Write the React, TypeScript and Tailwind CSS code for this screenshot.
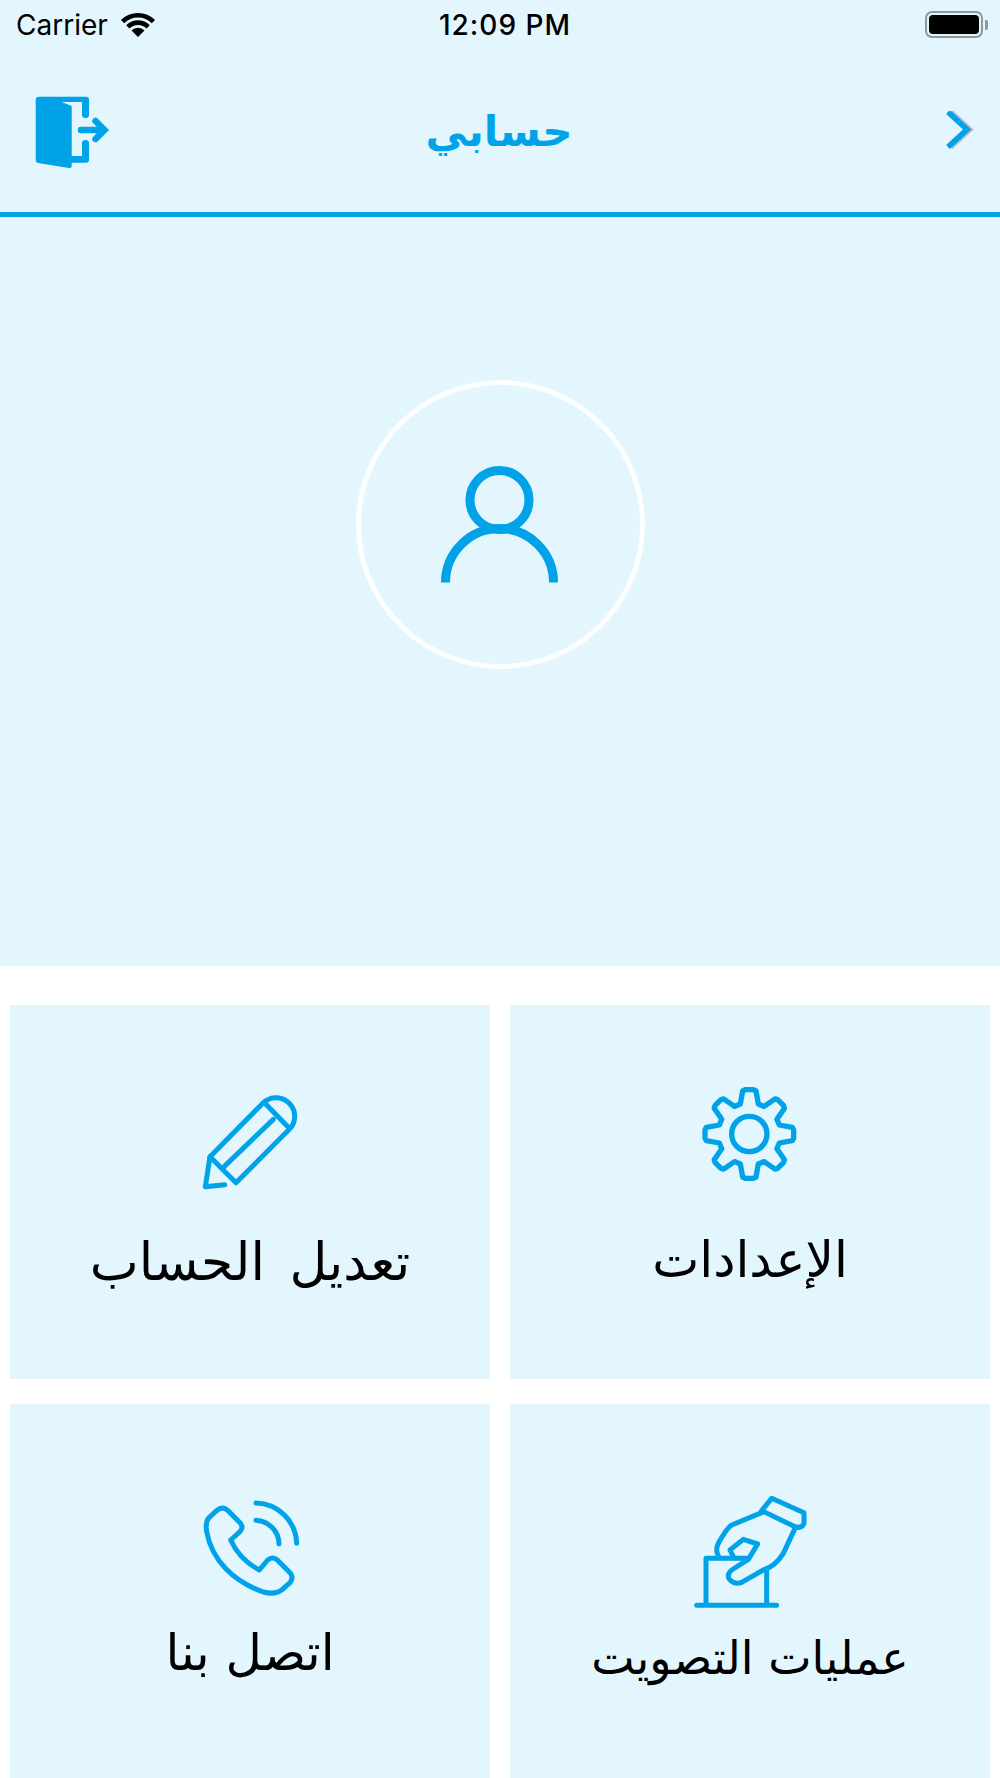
const gearPath = () => {
  // eight teeth round the centre, drawn in zoom coordinates
  const cx = 748;
  const cy = 522;
  const pts: string[] = [];
  for (let i = 0; i < 8; i++) {
    const a = (i * Math.PI) / 4 - Math.PI / 2;
    const at = (r: number, off: number) => {
      const x = cx + r * Math.cos(a) + off * -Math.sin(a);
      const y = cy + r * Math.sin(a) + off * Math.cos(a);
      return `${x.toFixed(1)} ${y.toFixed(1)}`;
    };
    pts.push(`${at(90, -27)}`, `${at(129, -20)}`, `${at(133, -12)}`, `${at(133, 12)}`, `${at(129, 20)}`, `${at(90, 27)}`);
  }
  return `M${pts.join(' L')} Z`;
};

function WifiIcon() {
  return (
    <svg width="36" height="26" viewBox="120 11 36 26" className="shrink-0">
      <path d="M138 36 L131.5 29.5 A9.2 9.2 0 0 1 144.5 29.5 Z" fill="#000" />
      <path d="M127.8 25.8 A14.5 14.5 0 0 1 148.2 25.8" fill="none" stroke="#000" strokeWidth="4.6" />
      <path d="M122.6 20.6 A21.8 21.8 0 0 1 153.4 20.6" fill="none" stroke="#000" strokeWidth="4.6" />
    </svg>
  );
}

function DoorIcon() {
  return (
    <svg width="76" height="76" viewBox="34 94 76 76" className="shrink-0">
      <path d="M36.7 100 Q36.7 96.7 40 96.7 L87 96.7 Q90 96.7 90 100 L90 115 Q90 118 86.5 118 Q83 118 83 115 L83 102 L62.7 102 L72.7 106 L72.7 156 L83 156 L83 143 Q83 140 86.5 140 Q90 140 90 143 L90 160 Q90 162.7 87 162.7 L72.7 162.7 L72.7 166 Q72.7 168.4 70 168 L39 163 Q36.7 162.5 36.7 160 Z" fill="#00a3e8" />
      <path d="M82 130 L104 130 M96.5 121 L105.5 130 L96.5 139" fill="none" stroke="#00a3e8" strokeWidth="6.5" strokeLinecap="round" strokeLinejoin="miter" />
    </svg>
  );
}

function BackChevron() {
  return (
    <svg width="28" height="42" viewBox="946 111 28 42" className="shrink-0">
      <path d="M950.5 112 L969.5 129.5 L950.5 147" fill="none" stroke="#8fa3ad" strokeWidth="5.5" opacity="0.7" />
      <path d="M948 112 L967 129.5 L948 147" fill="none" stroke="#00a3e8" strokeWidth="5.5" />
    </svg>
  );
}

function PersonIcon() {
  return (
    <svg width="128" height="128" viewBox="0 0 128 128">
      <circle cx="63.5" cy="39" r="29.5" fill="none" stroke="#00a3e8" strokeWidth="9" />
      <path d="M9.5 121.5 A54 54 0 0 1 117.5 121.5" fill="none" stroke="#00a3e8" strokeWidth="9" />
    </svg>
  );
}

function PencilIcon() {
  return (
    <svg width="100" height="100" viewBox="600 396 300 300" fill="none" stroke="#00a3e8" strokeWidth="15" strokeLinecap="round" strokeLinejoin="round">
      <path d="M630 590 L790 428 C815 405 850 410 870 432 C890 455 888 488 868 508 L708 668 Z" />
      <path d="M797 432 L868 505 M820 478 L670 622" />
      <path d="M630 590 L616 680 L674 674" />
    </svg>
  );
}

function GearIcon() {
  return (
    <svg width="100" height="100" viewBox="600 375 300 300" fill="none" stroke="#00a3e8" strokeWidth="16" strokeLinejoin="round">
      <path d={gearPath()} />
      <circle cx="748" cy="522" r="53" />
    </svg>
  );
}

function PhoneIcon() {
  return (
    <svg width="100" height="100" viewBox="600 354 300 300" fill="none" stroke="#00a3e8" strokeWidth="15" strokeLinecap="round" strokeLinejoin="round">
      <path d="M650 392 Q665 378 682 390 L720 428 Q732 442 720 455 L692 480 C710 520 740 550 778 570 L803 540 Q818 528 832 540 L870 578 Q882 592 870 608 L845 630 Q825 645 790 636 C700 605 635 540 620 455 Q615 425 628 412 Z" />
      <path d="M768 369 A125 125 0 0 1 890 490 M768 421 A72 72 0 0 1 837 492" />
    </svg>
  );
}

function BallotIcon() {
  return (
    <svg width="120" height="115" viewBox="570 345 360 345" fill="none" stroke="#00a3e8" strokeWidth="15" strokeLinecap="round" strokeLinejoin="round">
      <path d="M590 676 L830 676 M618 676 L618 535 L745 535 M800 676 L800 575" />
      <path d="M785 392 L815 355 L912 398 L912 430 Q905 447 885 440 Z" />
      <path d="M785 398 L695 435 Q680 445 655 490 Q645 510 655 528" />
      <path d="M885 445 L850 520 Q825 560 790 570 L725 607 Q705 615 690 600 Q678 585 695 570 L745 538 L773 492 L730 478 L690 510 L700 530" />
    </svg>
  );
}

export default function App() {
  return (
    <div className="w-[1000px] h-[1778px] overflow-hidden bg-white flex flex-col font-['Inter',sans-serif]">
      <div className="bg-[#e3f5fd] border-b-[5px] border-[#00a3e8] h-[217px] shrink-0 flex flex-col">
        <div className="h-[46px] pt-[3px] pl-[16px] pr-[12px] grid grid-cols-3 items-center text-black">
          <div className="flex items-center gap-[12px]">
            <span className="text-[28px] leading-none">Carrier</span>
            <WifiIcon />
          </div>
          <span className="text-center text-[28px] tracking-[1px] leading-none font-medium ml-[6px]">12:09 PM</span>
          <div className="flex items-center justify-end">
            <div className="w-[58px] h-[27px] rounded-[7px] border-2 border-[#8d999f] p-[2px]">
              <div className="w-full h-full rounded-[4px] bg-black" />
            </div>
            <div className="w-[3px] h-[10px] bg-[#8d999f] rounded-r-[2px] ml-[2px]" />
          </div>
        </div>
        <div className="flex-1 pt-[6px] pl-[33px] pr-[26px] grid grid-cols-3 items-center">
          <DoorIcon />
          <h1 dir="rtl" lang="ar" className="text-center text-[42px] leading-none font-bold text-[#00a3e8] mr-[9px] font-['DejaVu_Sans',sans-serif]">حسابي</h1>
          <div className="flex justify-end">
            <BackChevron />
          </div>
        </div>
      </div>

      <div className="h-[749px] shrink-0 bg-[#e3f5fd] pt-[163px] flex justify-center">
        <div className="w-[289px] h-[289px] rounded-full border-[5px] border-white/90 flex items-center justify-center">
          <PersonIcon />
        </div>
      </div>

      <div className="flex-1 pt-[39px] px-[10px] grid grid-cols-2 gap-x-[20px] gap-y-[25px] grid-rows-[374px_374px]">
        <div className="bg-[#e3f5fd] pt-[87px] flex flex-col items-center">
          <PencilIcon />
          <p dir="rtl" lang="ar" className="mt-[40px] text-[52px] leading-[60px] [word-spacing:8px] text-black font-['DejaVu_Sans',sans-serif]">تعديل الحساب</p>
        </div>
        <div className="bg-[#e3f5fd] pt-[80px] flex flex-col items-center">
          <GearIcon />
          <p dir="rtl" lang="ar" className="mt-[45px] text-[50px] leading-[60px] text-black font-['DejaVu_Sans',sans-serif]">الإعدادات</p>
        </div>
        <div className="bg-[#e3f5fd] pt-[94px] flex flex-col items-center">
          <PhoneIcon />
          <p dir="rtl" lang="ar" className="mt-[25px] text-[50px] leading-[60px] text-black font-['DejaVu_Sans',sans-serif]">اتصل بنا</p>
        </div>
        <div className="bg-[#e3f5fd] pt-[91px] flex flex-col items-center">
          <BallotIcon />
          <p dir="rtl" lang="ar" className="mt-[18px] text-[46px] leading-[60px] text-black font-['DejaVu_Sans',sans-serif]">عمليات التصويت</p>
        </div>
      </div>
    </div>
  );
}
